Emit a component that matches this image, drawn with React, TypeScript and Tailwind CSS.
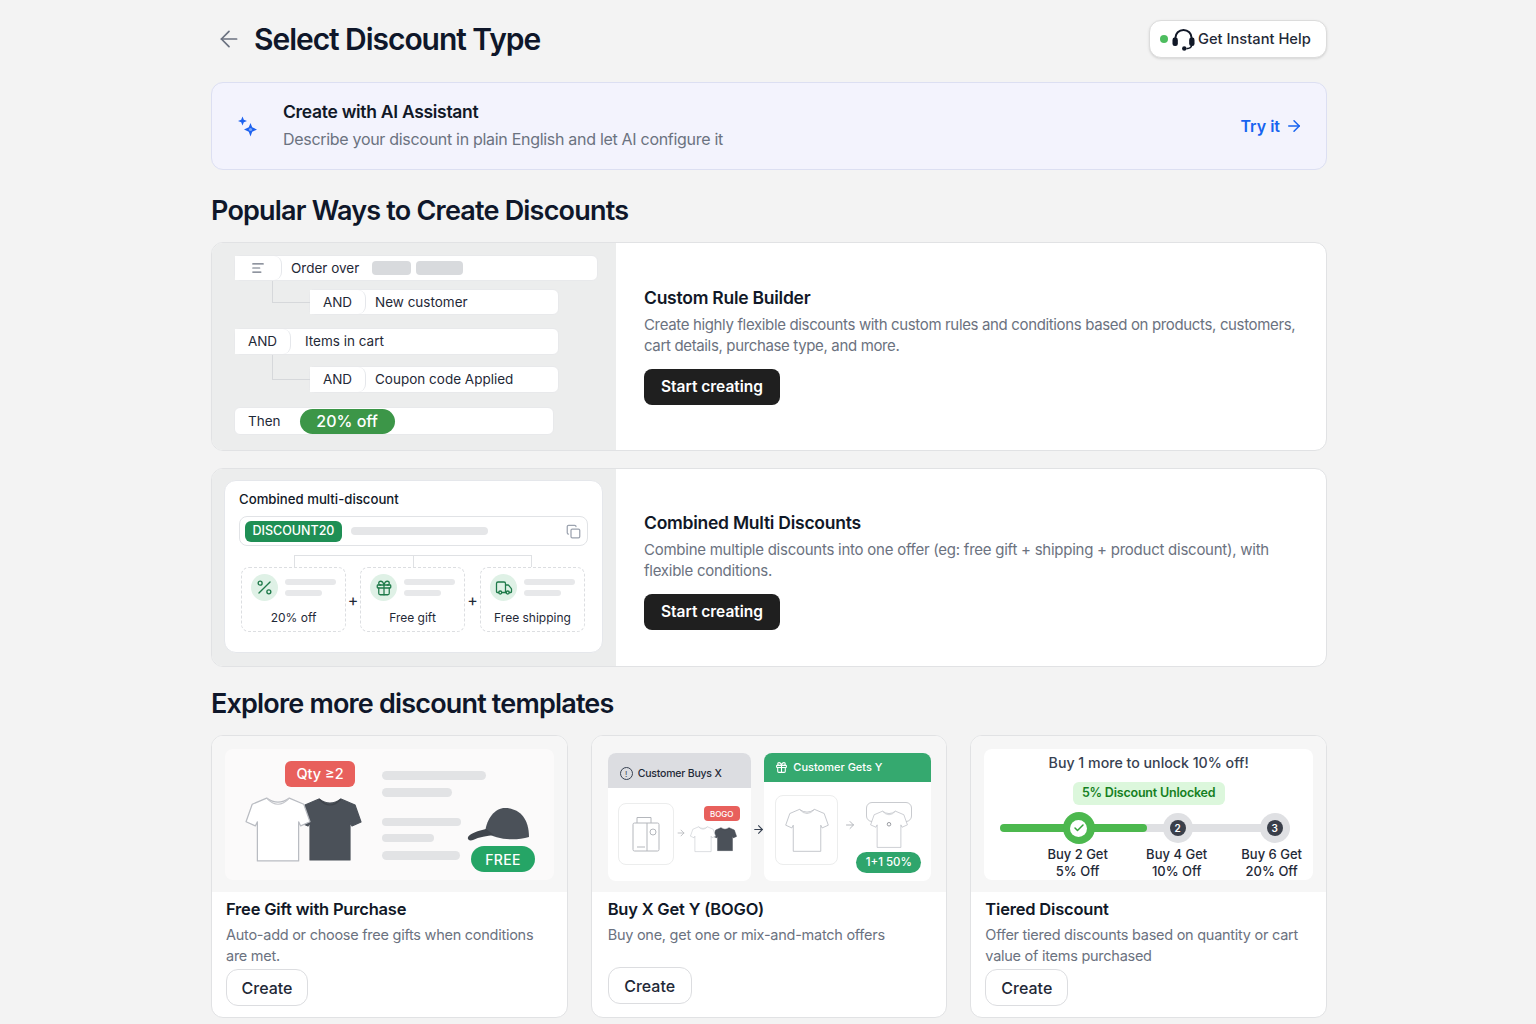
import React from 'react';
import { ArrowLeft, ArrowRight, Check, Copy, Gift, Percent, Truck, AlignLeft } from 'lucide-react';

const Tee = ({ dark = false, mark = false, className = '' }: { dark?: boolean; mark?: boolean; className?: string }) => (
  <svg viewBox="0 0 64 64" className={className}>
    <path
      d="M21 2 L7 8 L1 25 L10 29 L12 25 L12 63 L52 63 L52 25 L54 29 L63 25 L57 8 L43 2 Q32 10 21 2Z"
      fill={dark ? '#4b5159' : '#ffffff'}
      stroke={dark ? '#4b5159' : '#b9bcc2'}
      strokeWidth="1.2"
      strokeLinejoin="round"
    />
    <path d="M21 2 Q32 14 43 2" fill="none" stroke={dark ? '#3f444b' : '#c4c6cb'} strokeWidth="1.2" />
    {mark && <circle cx="32" cy="24" r="3" fill="none" stroke="#8d9096" strokeWidth="1.5" />}
  </svg>
);

const Cap = () => (
  <svg viewBox="0 0 64 34" className="w-[64px] h-[34px]">
    <path d="M18 25 C20 11 28 1 38 1 C52 1 62 11 62 30 C48 34 30 33 18 25Z" fill="#4b5159" />
    <path d="M19 22 C11 24 4 26 1 30 C0 33 3 34 6 33 C12 30 20 29 27 28Z" fill="#40454c" />
  </svg>
);

const Sparkle = () => (
  <svg viewBox="0 0 20 21" className="w-[20px] h-[21px]" fill="#1d62f0">
    <path d="M4.5 0.5 L5.8 3.7 L9 5 L5.8 6.3 L4.5 9.5 L3.2 6.3 L0 5 L3.2 3.7Z" />
    <path d="M12.5 7 L14.2 11.3 L19 13.5 L14.2 15.7 L12.5 20.5 L10.8 15.7 L6 13.5 L10.8 11.3Z" />
    <circle cx="12.5" cy="13.5" r="1.6" fill="#7aa5f7" />
  </svg>
);

const Headset = () => (
  <svg viewBox="0 0 24 24" className="w-[23px] h-[23px]" fill="none">
    <path d="M3.5 14 V10.5 a8.5 8.5 0 0 1 17 0 V14" stroke="#111827" strokeWidth="2.1" />
    <rect x="0.5" y="10" width="5.6" height="8.8" rx="2.4" fill="#111827" />
    <rect x="17.9" y="10" width="5.6" height="8.8" rx="2.4" fill="#111827" />
    <path d="M20.5 18 Q20 21.5 15 21.5" stroke="#111827" strokeWidth="1.8" />
    <circle cx="12.8" cy="21.4" r="2.3" fill="#111827" />
  </svg>
);

const RuleTag = ({ children, className = '' }: { children: React.ReactNode; className?: string }) => (
  <div className={`flex items-center justify-center h-full bg-white rounded-r-lg border-r border-gray-200 text-[13.5px] text-[#1f2937] ${className}`}>
    {children}
  </div>
);

const RulePreview = () => (
  <div className="w-[404px] shrink-0 bg-[#eceded] pl-[22px] pt-[12px] flex flex-col items-start">
    <div className="w-[364px] h-[26px] bg-white rounded-md border border-[#e8e9eb] flex items-center">
      <RuleTag className="w-[47px]"><AlignLeft className="w-[14px] h-[14px] text-[#6b7280]" /></RuleTag>
      <span className="ml-[9px] text-[13.5px] text-[#1f2937]">Order over</span>
      <span className="ml-[13px] w-[39px] h-[14px] rounded bg-[#d8dadd]" />
      <span className="ml-[5px] w-[47px] h-[14px] rounded bg-[#d8dadd]" />
    </div>
    <div className="relative ml-[75px] mt-[8px] w-[250px] h-[26px] bg-white rounded-md border border-[#e8e9eb] flex items-center">
      <div className="absolute -left-[38px] -top-[9px] w-[38px] h-[22px] border-l border-b border-[#d6d8db]" />
      <RuleTag className="w-[56px]">AND</RuleTag>
      <span className="ml-[9px] text-[13.5px] text-[#1f2937]">New customer</span>
    </div>
    <div className="mt-[13px] w-[325px] h-[27px] bg-white rounded-md border border-[#e8e9eb] flex items-center">
      <RuleTag className="w-[56px]">AND</RuleTag>
      <span className="ml-[14px] text-[13.5px] text-[#1f2937]">Items in cart</span>
    </div>
    <div className="relative ml-[75px] mt-[11px] w-[250px] h-[27px] bg-white rounded-md border border-[#e8e9eb] flex items-center">
      <div className="absolute -left-[38px] -top-[12px] w-[38px] h-[25px] border-l border-b border-[#d6d8db]" />
      <RuleTag className="w-[56px]">AND</RuleTag>
      <span className="ml-[9px] text-[13.5px] text-[#1f2937]">Coupon code Applied</span>
    </div>
    <div className="mt-[14px] w-[320px] h-[28px] bg-white rounded-md border border-[#e8e9eb] flex items-center">
      <span className="ml-[13px] text-[13.5px] text-[#1f2937]">Then</span>
      <span className="ml-[19px] w-[95px] h-[25px] rounded-full bg-[#3c9648] text-white text-[16px] font-medium flex items-center justify-center">20% off</span>
    </div>
  </div>
);

const ComboTile = ({ icon, label }: { icon: React.ReactNode; label: string }) => (
  <div className="w-[105px] h-[65px] rounded-lg border border-dashed border-[#dcdee1] px-[9px] pt-[6px] flex flex-col">
    <div className="flex items-center gap-[7px]">
      <div className="w-[27px] h-[27px] rounded-full bg-[#dff1e6] flex items-center justify-center text-[#1f7a4a] shrink-0">{icon}</div>
      <div className="flex flex-col gap-[5px]">
        <span className="w-[51px] h-[6px] rounded-full bg-[#e7e8ea]" />
        <span className="w-[37px] h-[6px] rounded-full bg-[#e7e8ea]" />
      </div>
    </div>
    <span className="mt-[9px] text-center text-[12px] leading-[16px] text-[#1f2937]">{label}</span>
  </div>
);

const ComboPreview = () => (
  <div className="w-[404px] shrink-0 bg-[#eceded] pl-[12px] pt-[11px]">
    <div className="w-[379px] h-[173px] bg-white rounded-xl border border-[#e5e7eb] px-[14px] pt-[9px]">
      <p className="text-[13.2px] leading-[18px] font-medium text-[#111827]">Combined multi-discount</p>
      <div className="mt-[8px] h-[30px] rounded-lg border border-[#e1e3e6] flex items-center pl-[5px] pr-[6px]">
        <span className="h-[21px] w-[97px] rounded-md bg-[#1f8f55] text-white text-[12.5px] font-medium flex items-center justify-center">DISCOUNT20</span>
        <span className="ml-[9px] w-[137px] h-[8px] rounded-full bg-[#e5e6e8]" />
        <Copy className="ml-auto w-[15px] h-[15px] text-[#9ca3af]" />
      </div>
      <div className="relative mt-[21px] ml-[2px] flex items-center">
        <div className="absolute left-[53px] -top-[12px] w-[238px] h-[12px] border-l border-t border-r border-[#dfe1e4]" />
        <div className="absolute left-[172px] -top-[12px] h-[12px] border-l border-[#dfe1e4]" />
        <ComboTile icon={<Percent className="w-[19px] h-[19px]" strokeWidth={1.7} />} label="20% off" />
        <span className="w-[14px] text-center text-[16px] text-[#1f2937]">+</span>
        <ComboTile icon={<Gift className="w-[18px] h-[18px]" strokeWidth={1.7} />} label="Free gift" />
        <span className="w-[15px] text-center text-[16px] text-[#1f2937]">+</span>
        <ComboTile icon={<Truck className="w-[18px] h-[18px]" strokeWidth={1.7} />} label="Free shipping" />
      </div>
    </div>
  </div>
);

const WideCard = ({ preview, title, desc, height, contentClass, descClass }: { preview: React.ReactNode; title: string; desc: React.ReactNode; height: string; contentClass: string; descClass: string }) => (
  <div className={`flex ${height} rounded-xl border border-[#e1e2e4] bg-white overflow-hidden`}>
    {preview}
    <div className={`flex flex-col justify-center items-start pl-[28px] pr-[26px] flex-1 ${contentClass}`}>
      <h3 className="text-[17.5px] leading-[24px] font-semibold text-[#111827] tracking-[-0.25px]">{title}</h3>
      <p className={`mt-[4px] text-[15px] leading-[21px] text-[#6b7280] whitespace-nowrap ${descClass}`}>{desc}</p>
      <button className="mt-[13px] w-[136px] h-[36px] rounded-lg bg-[#1f1f1f] text-white text-[15.5px] font-semibold">Start creating</button>
    </div>
  </div>
);

const GiftArt = () => (
  <div className="h-[131px] rounded-lg bg-[#fbfafa] flex pl-[20px] pt-[12px]">
    <div className="w-[118px] flex flex-col">
      <span className="ml-[40px] w-[70px] h-[26px] rounded-md bg-[#e8605c] text-white text-[14.5px] font-medium flex items-center justify-center">Qty ≥2</span>
      <div className="flex mt-[9px]">
        <Tee className="w-[66px] h-[66px] z-10" />
        <Tee dark className="w-[64px] h-[66px] -ml-[13px]" />
      </div>
    </div>
    <div className="ml-[19px] pt-[10px] flex flex-col">
      <span className="w-[104px] h-[9px] rounded-full bg-[#e2e3e5]" />
      <span className="mt-[8px] w-[70px] h-[9px] rounded-full bg-[#e2e3e5]" />
      <span className="mt-[21px] w-[79px] h-[8px] rounded-full bg-[#e2e3e5]" />
      <span className="mt-[8px] w-[52px] h-[8px] rounded-full bg-[#e2e3e5]" />
      <span className="mt-[9px] w-[78px] h-[9px] rounded-full bg-[#e2e3e5]" />
    </div>
    <div className="-ml-[19px] pt-[46px] flex flex-col">
      <Cap />
      <span className="mt-[5px] ml-[4px] w-[64px] h-[26px] rounded-full bg-[#25a566] text-white text-[14px] font-medium tracking-wide flex items-center justify-center">FREE</span>
    </div>
  </div>
);

const BagIcon = () => (
  <svg viewBox="0 0 30 36" className="w-[30px] h-[36px]" fill="none" stroke="#b4b7bc" strokeWidth="1">
    <rect x="2" y="7" width="26" height="28" rx="1.5" />
    <path d="M6 7 V1.5 H20 V7 M16 7 V35 M6 31 H14" />
    <circle cx="22" cy="16" r="3" />
  </svg>
);

const BogoArt = () => (
  <div className="relative h-[128px] mt-[4px] ml-[16px] mr-[15px] flex justify-between">
    <div className="w-[143px] rounded-lg bg-white overflow-hidden">
      <div className="h-[35px] bg-[#dcdde1] flex items-center pl-[12px] gap-[5px] pt-[6px]">
        <span className="w-[13px] h-[13px] rounded-full border border-[#374151] text-[8px] leading-none text-[#374151] flex items-center justify-center">!</span>
        <span className="text-[10.5px] font-medium text-[#1f2937] tracking-[-0.2px]">Customer Buys X</span>
      </div>
      <div className="flex items-start pl-[10px] pt-[15px]">
        <div className="w-[56px] h-[62px] rounded-lg border border-[#eceded] flex items-center justify-center"><BagIcon /></div>
        <ArrowRight className="ml-[2px] mt-[25px] w-[10px] h-[10px] text-[#b4b7bc]" />
        <div className="ml-[4px] mt-[3px] w-[50px] flex flex-col items-end">
          <span className="w-[36px] h-[15px] rounded bg-[#e8605c] text-white text-[8px] font-medium flex items-center justify-center">BOGO</span>
          <div className="flex mt-[4px] self-start">
            <Tee className="w-[26px] h-[28px] z-10" />
            <Tee dark className="w-[24px] h-[28px] -ml-[3px]" />
          </div>
        </div>
      </div>
    </div>
    <ArrowRight className="absolute left-[144px] top-[70px] w-[13px] h-[13px] text-[#374151]" />
    <div className="w-[167px] rounded-lg bg-white overflow-hidden">
      <div className="h-[29px] bg-[#35a96f] flex items-center pl-[11px] gap-[5px]">
        <Gift className="w-[13px] h-[13px] text-white" />
        <span className="text-[11px] font-medium text-white">Customer Gets Y</span>
      </div>
      <div className="flex pl-[11px] pt-[13px]">
        <div className="w-[63px] h-[70px] rounded-lg border border-[#eceded] flex items-center justify-center">
          <Tee className="w-[46px] h-[44px]" />
        </div>
        <div className="ml-[6px] mt-[24px]"><ArrowRight className="w-[12px] h-[12px] text-[#b4b7bc]" /></div>
        <div className="flex flex-col items-center">
          <div className="relative mt-[7px] w-[46px]">
            <span className="absolute left-0 top-0 w-[46px] h-[20px] rounded-md border border-[#c9cbcf]" />
            <Tee mark className="relative w-[46px] h-[38px] mt-[8px]" />
          </div>
          <span className="mt-[4px] w-[65px] h-[21px] rounded-full bg-[#2fa56c] text-white text-[11.5px] font-medium flex items-center justify-center">1+1 50%</span>
        </div>
      </div>
    </div>
  </div>
);

const TierStep = ({ n }: { n: number }) => (
  <div className="relative z-10 w-[30px] h-[30px] rounded-full bg-[#dfe0e3] flex items-center justify-center">
    <span className="w-[16px] h-[16px] rounded-full bg-[#3a3f4a] text-white text-[10px] font-semibold flex items-center justify-center">{n}</span>
  </div>
);

const TierArt = () => (
  <div className="h-[131px] rounded-lg bg-white flex flex-col items-center pt-[5px]">
    <p className="text-[14.2px] leading-[18px] font-medium text-[#374151]">Buy 1 more to unlock 10% off!</p>
    <span className="mt-[10px] w-[152px] h-[24px] rounded-md bg-[#dcf7dc] text-[#15801f] text-[12.5px] font-semibold flex items-center justify-center tracking-[-0.2px]">5% Discount Unlocked</span>
    <div className="relative mt-[7px] w-[298px] h-[32px] flex items-center pl-[63px]">
      <div className="absolute left-[15px] right-[8px] top-[12px] h-[8px] rounded-full bg-[#dfe0e3]" />
      <div className="absolute left-0 w-[147px] top-[12px] h-[8px] rounded-full bg-[#4cb84e]" />
      <div className="relative z-10 w-[32px] h-[32px] rounded-full bg-[#4cb84e] flex items-center justify-center">
        <span className="w-[17px] h-[17px] rounded-full bg-white flex items-center justify-center">
          <Check className="w-[12px] h-[12px] text-[#35a33a]" strokeWidth={3} />
        </span>
      </div>
      <div className="ml-[68px] relative z-10"><TierStep n={2} /></div>
      <div className="ml-[67px] relative z-10"><TierStep n={3} /></div>
    </div>
    <div className="mt-[2px] w-[298px] flex text-[13px] leading-[17px] font-medium text-[#1f2937] text-center pl-[43px] whitespace-nowrap">
      <span className="shrink-0 w-[70px]">Buy 2 Get<br />5% Off</span>
      <span className="shrink-0 ml-[29px] w-[70px]">Buy 4 Get<br />10% Off</span>
      <span className="shrink-0 ml-[25px] w-[70px]">Buy 6 Get<br />20% Off</span>
    </div>
  </div>
);

const TemplateCard = ({ art, title, desc, btnWidth, compact = false, artClass, bodyClass }: { art: React.ReactNode; title: string; desc: React.ReactNode; btnWidth: string; compact?: boolean; artClass: string; bodyClass: string }) => (
  <div className="rounded-xl border border-[#e1e2e4] bg-white overflow-hidden h-[283px] flex flex-col">
    <div className={`h-[156px] bg-[#f6f6f6] shrink-0 ${artClass}`}>{art}</div>
    <div className={`pt-[5px] flex flex-col items-start flex-1 ${bodyClass}`}>
      <h3 className="text-[16.5px] leading-[24px] font-semibold text-[#111827] tracking-[-0.2px]">{title}</h3>
      <p className="mt-[3px] h-[42px] text-[14.5px] leading-[21px] text-[#6b7280] tracking-[-0.26px] whitespace-nowrap">{desc}</p>
      <button className={`${compact ? 'mt-[1px]' : 'mt-[3px]'} ${btnWidth} h-[37px] rounded-xl border border-[#dcdde0] bg-white text-[16px] font-medium text-[#1f2937]`}>Create</button>
    </div>
  </div>
);

export default function App() {
  return (
    <div className="min-h-[1024px] bg-[#f3f3f3] font-['Inter',sans-serif]">
      <div className="w-[1118px] mx-auto pl-[2px] pt-[20px] pb-[5px]">
        {/* Header */}
        <div className="flex items-center justify-between h-[38px]">
          <div className="flex items-center">
            <ArrowLeft className="ml-[5px] w-[26px] h-[26px] text-[#6b7280]" strokeWidth={1.6} />
            <h1 className="ml-[12px] text-[30px] font-semibold text-[#0f172a] tracking-[-1.05px]">Select Discount Type</h1>
          </div>
          <button className="w-[178px] h-[38px] rounded-xl bg-white border border-[#dcdcdc] shadow-sm flex items-center pl-[10px]">
            <span className="w-[8px] h-[8px] rounded-full bg-[#4dbd5f]" />
            <span className="ml-[4px]"><Headset /></span>
            <span className="ml-[3px] text-[14.7px] font-medium text-[#1f2937]">Get Instant Help</span>
          </button>
        </div>

        {/* AI banner */}
        <div className="mt-[24px] h-[88px] rounded-xl border border-[#dcdff2] bg-[#f3f3fd] flex items-center pl-[26px] pr-[23px]">
          <Sparkle />
          <div className="ml-[25px] pb-[2px]">
            <p className="text-[17.5px] leading-[24px] font-semibold text-[#111827] tracking-[-0.3px]">Create with AI Assistant</p>
            <p className="mt-[3px] text-[16px] leading-[24px] text-[#6b7280] tracking-[-0.3px]">Describe your discount in plain English and let AI configure it</p>
          </div>
          <span className="ml-auto flex items-center gap-[5px] text-[16px] font-semibold text-[#1764f0]">
            Try it <ArrowRight className="w-[18px] h-[18px]" />
          </span>
        </div>

        <h2 className="mt-[25px] text-[27px] leading-[32px] font-semibold text-[#0f172a] tracking-[-0.8px]">Popular Ways to Create Discounts</h2>

        <div className="mt-[15px] flex flex-col gap-[17px]">
          <WideCard
            height="h-[209px]"
            contentClass="pb-[2px]"
            descClass="tracking-[-0.35px]"
            preview={<RulePreview />}
            title="Custom Rule Builder"
            desc={<>Create highly flexible discounts with custom rules and conditions based on products, customers,<br />cart details, purchase type, and more.</>}
          />
          <WideCard
            height="h-[199px]"
            contentClass="pt-[6px]"
            descClass="tracking-[-0.25px]"
            preview={<ComboPreview />}
            title="Combined Multi Discounts"
            desc={<>Combine multiple discounts into one offer (eg: free gift + shipping + product discount), with<br />flexible conditions.</>}
          />
        </div>

        <h2 className="mt-[21px] text-[27px] leading-[32px] font-semibold text-[#0f172a] tracking-[-0.82px]">Explore more discount templates</h2>

        <div className="mt-[15px] grid grid-cols-3 gap-[23px]">
          <TemplateCard
            artClass="p-[13px] pb-0"
            bodyClass="pl-[14px]"
            art={<GiftArt />}
            title="Free Gift with Purchase"
            desc={<>Auto-add or choose free gifts when conditions<br />are met.</>}
            btnWidth="w-[82px]"
          />
          <TemplateCard
            artClass="pt-[13px]"
            bodyClass="pl-[16px]"
            art={<BogoArt />}
            title="Buy X Get Y (BOGO)"
            desc="Buy one, get one or mix-and-match offers"
            btnWidth="w-[84px]"
            compact
          />
          <TemplateCard
            artClass="p-[13px] pb-0"
            bodyClass="pl-[14px]"
            art={<TierArt />}
            title="Tiered Discount"
            desc={<>Offer tiered discounts based on quantity or cart<br />value of items purchased</>}
            btnWidth="w-[83px]"
          />
        </div>
      </div>
    </div>
  );
}
